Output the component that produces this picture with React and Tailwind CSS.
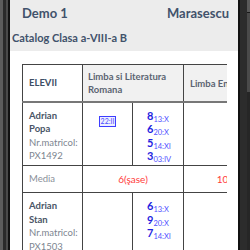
import React from 'react';

const students = [
  {
    first: 'Adrian',
    last: 'Popa',
    nr: 'PX1492',
    absences: ['22:II'],
    grades: [
      ['8', '13:X'],
      ['6', '20:X'],
      ['5', '14:XI'],
      ['3', '03:IV'],
    ],
    media: '6(şase)',
    mediaEn: '10',
  },
  {
    first: 'Adrian',
    last: 'Stan',
    nr: 'PX1503',
    absences: [],
    grades: [
      ['6', '13:X'],
      ['9', '20:X'],
      ['7', '14:XI'],
    ],
  },
];

const StudentCell = ({ s }) => (
  <td className="border border-[#444] align-top px-[6px] pt-[6px] pb-[2px] leading-[13.5px]">
    <div className="font-bold text-[#4a5566]">{s.first}</div>
    <div className="font-bold text-[#4a5566]">{s.last}</div>
    <div className="text-[#7d8590] whitespace-nowrap">Nr.matricol:</div>
    <div className="text-[#7d8590]">{s.nr}</div>
  </td>
);

const App = () => {
  return (
    <div className="flex w-[250px] h-[250px] overflow-hidden bg-[#2b2b2b] font-['Lato','Liberation_Sans',sans-serif]">
      {/* phone frame, left */}
      <div className="w-[10px] h-full flex">
        <div className="w-[3px] bg-[#5c5c5c]" />
        <div className="w-[3px] bg-[#2a2a2a]" />
        <div className="w-[2px] bg-[#4a4a4a]" />
        <div className="w-[2px] bg-[#111]" />
      </div>

      {/* screen */}
      <div className="w-[228px] h-full flex flex-col bg-white">
        <div className="bg-[#ececec] h-[51px] shrink-0 flex flex-col">
          <div className="flex justify-between items-center h-[28px] pl-[12px] pr-[9px] text-[13px] font-bold text-[#41526b]">
            <span>Demo 1</span>
            <span>Marasescu</span>
          </div>
          <div className="pl-[2px] pt-[2px] text-[11px] font-bold text-[#41526b] leading-[16px]">
            Catalog Clasa a-VIII-a B
          </div>
        </div>

        <div className="pt-[13px] pl-[12px] pr-[10px]">
          <div className="w-[205px] overflow-hidden">
            <table className="table-fixed border-collapse w-[239px] text-[9.5px]">
              <colgroup>
                <col className="w-[60px]" />
                <col className="w-[50px]" />
                <col className="w-[51px]" />
                <col className="w-[78px]" />
              </colgroup>
              <thead>
                <tr className="h-[37px]">
                  <th className="border border-[#444] border-b-2 border-b-[#777] text-left px-[6px] font-bold text-[#3e4f66]">
                    ELEVII
                  </th>
                  <th colSpan={2} className="border border-[#444] border-b-2 border-b-[#777] bg-[#f1f1f1] text-left px-[5px] font-bold text-[#5b6472] leading-[13px]">
                    Limba si Literatura Romana
                  </th>
                  <th className="border border-[#444] border-b-2 border-b-[#777] bg-[#f1f1f1] text-left px-[6px] pt-[2px] font-bold text-[#5b6472] whitespace-nowrap">
                    Limba Engleza
                  </th>
                </tr>
              </thead>
              <tbody>
                {students.map((s, i) => (
                  <React.Fragment key={i}>
                    <tr className="h-[64px]">
                      <StudentCell s={s} />
                      <td className="border border-[#444] align-top text-center pt-[11px]">
                        {s.absences.map((a) => (
                          <span key={a} className="inline-block border border-[#3d3dff] bg-[#eef0ff] text-[#4a4aff] text-[7px] leading-[7px] px-[1px] py-[1px]">
                            {a}
                          </span>
                        ))}
                      </td>
                      <td className="border border-[#444] align-top pt-[6px] pl-[14px] leading-[13.5px]">
                        {s.grades.map(([g, d]) => (
                          <div key={d} className="whitespace-nowrap h-[13.5px]">
                            <span className="font-bold text-[11px] text-[#1f1fe0]">{g}</span>
                            <span className="text-[7.5px] text-[#5050ff] relative top-[2px]">{d}</span>
                          </div>
                        ))}
                      </td>
                      <td className="border border-[#444]" />
                    </tr>
                    {s.media && (
                      <tr className="h-[27px]">
                        <td className="border border-[#444] px-[6px] text-[#8a9099]">Media</td>
                        <td colSpan={2} className="border border-[#444] text-center text-[10px] text-[#ff3b3b]">
                          {s.media}
                        </td>
                        <td className="border border-[#444] text-center text-[10px] text-[#ff3b3b]">
                          {s.mediaEn}
                        </td>
                      </tr>
                    )}
                  </React.Fragment>
                ))}
              </tbody>
            </table>
          </div>
        </div>
      </div>

      {/* phone frame, right */}
      <div className="flex-1 h-full flex">
        <div className="w-[2px] h-full bg-[#111]" />
        <div className="w-[7px] h-full bg-[#2c2c2c]" />
        <div className="flex-1 flex flex-col">
          <div className="h-[12px] bg-[#5a5a5a]" />
          <div className="h-[80px] bg-[#4a4a4a] border-t border-[#1a1a1a]" />
          <div className="flex-1 bg-[#262626]" />
        </div>
      </div>
    </div>
  );
};

export default App;
